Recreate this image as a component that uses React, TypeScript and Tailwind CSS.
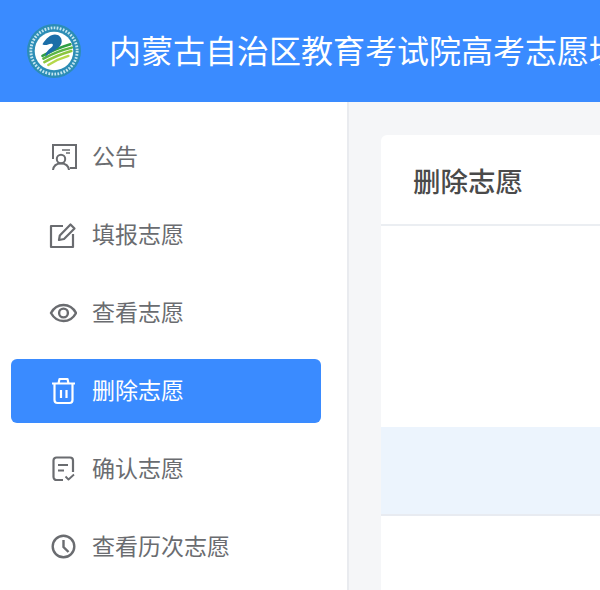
const cjk = { fontFamily: '"Noto Sans CJK SC", "Liberation Sans", sans-serif' };

function Logo() {
  return (
    <svg width="54" height="54" viewBox="0 0 56 56" className="shrink-0">
      <circle cx="28" cy="28" r="28" fill="#2c8db5" />
      <circle cx="28" cy="28" r="24" fill="none" stroke="#c4e6f0" strokeWidth="3" strokeDasharray="1.8 1.4" />
      <circle cx="28" cy="28" r="20" fill="#ffffff" />
      <g fill="none" strokeLinecap="round">
        <path d="M16 33C25 28 35 24 45 21" stroke="#2f9e44" strokeWidth="2.600" />
        <path d="M17 36C26 31 36 27 46.500 24.500" stroke="#5bb543" strokeWidth="2.600" />
        <path d="M18 39.500C27 34.500 36 31 46 28" stroke="#8cc63f" strokeWidth="2.600" />
        <path d="M22 42.500C29 38 36 35 43 33" stroke="#b5d84a" strokeWidth="2.400" />
      </g>
      <path
        d="M16 21C20 15 24 11 29 11C33 11 36 14 36 18C36 23 31 26 26 29C22 31 20 33 19 34C19 29 23 26 26 23.500C27.500 22 27 20 25 20.500C22 21 19 23 16 21z"
        fill="#1b6ea8"
      />
    </svg>
  );
}

function NoticeIcon() {
  return (
    <svg width="28" height="28" viewBox="0 0 28 28" fill="none" stroke="currentColor" strokeWidth="2">
      <path d="M4 16V2h23v23h-6" />
      <path d="M13 7h8M17 10h4" strokeWidth="1.500" />
      <circle cx="12" cy="16" r="4.200" />
      <path d="M4 27c.5-4 3-6.500 8-6.500s7.500 2.500 8 6.500" />
    </svg>
  );
}

function EditIcon() {
  return (
    <svg width="28" height="28" viewBox="0 0 28 28" fill="none" stroke="currentColor" strokeWidth="2.200" strokeLinejoin="round">
      <path d="M14 5H2v21h22V13" />
      <path d="M10 19l.8-4.500L21.500 3.500l4 4L15 18z" />
    </svg>
  );
}

function EyeIcon() {
  return (
    <svg width="28" height="28" viewBox="0 0 28 28" fill="none" stroke="currentColor" strokeWidth="2.400">
      <path d="M2 14c3-5.500 7-8 12.500-8S24 8.500 27 14c-3 5.500-7 8-12.500 8S5 19.500 2 14z" />
      <circle cx="14.500" cy="14" r="4.400" />
    </svg>
  );
}

function TrashIcon() {
  return (
    <svg width="28" height="28" viewBox="0 0 28 28" fill="none" stroke="currentColor" strokeWidth="2.200" strokeLinejoin="round">
      <path d="M3 6.500h23M9.500 6.500l1-4.500h8l1 4.500" />
      <path d="M5.500 6.500V23a3 3 0 0 0 3 3h12a3 3 0 0 0 3-3V6.500" />
      <path d="M12 13v8M17.500 13v8" />
    </svg>
  );
}

function ConfirmIcon() {
  return (
    <svg width="28" height="28" viewBox="0 0 28 28" fill="none" stroke="currentColor" strokeWidth="2.200" strokeLinejoin="round">
      <path d="M14 25H7.500a3 3 0 0 1-3-3V5.500a3 3 0 0 1 3-3H21a3 3 0 0 1 3 3V17" />
      <path d="M9 10h10M9 15.500h6" />
      <path d="M16.500 21.500l3 3 5.500-5" strokeWidth="1.800" />
    </svg>
  );
}

function ClockIcon() {
  return (
    <svg width="28" height="28" viewBox="0 0 28 28" fill="none" stroke="currentColor" strokeWidth="2.400">
      <circle cx="14.500" cy="13.500" r="10.800" />
      <path d="M14.500 7v7l5 5" />
    </svg>
  );
}

const NAV_ITEMS = [
  { label: "公告", icon: <NoticeIcon /> },
  { label: "填报志愿", icon: <EditIcon /> },
  { label: "查看志愿", icon: <EyeIcon /> },
  { label: "删除志愿", icon: <TrashIcon />, active: true },
  { label: "确认志愿", icon: <ConfirmIcon /> },
  { label: "查看历次志愿", icon: <ClockIcon /> },
];

export default function App() {
  return (
    <div className="flex h-[590px] w-[600px] flex-col overflow-hidden bg-white" style={cjk}>
      <header className="flex h-[102px] shrink-0 items-center gap-[28px] bg-[#3a8bff] pl-[27px]">
        <Logo />
        <h1 className="whitespace-nowrap pb-1 text-[32px] leading-none font-normal text-white">
          内蒙古自治区教育考试院高考志愿填报
        </h1>
      </header>

      <div className="flex min-h-0 flex-1">
        {/* 왼쪽 메뉴 */}
        <aside className="flex w-[349px] shrink-0 flex-col gap-3.5 border-r-2 border-[#e9ebef] pt-[23px] pl-[11px]">
          {NAV_ITEMS.map((item) => (
            <div
              key={item.label}
              className={[
                "flex h-16 w-[310px] items-center gap-[15px] rounded-md pl-[38px] text-[23px]",
                item.active ? "bg-[#3a8bff] text-white" : "text-[#6a6c70]",
              ].join(" ")}
            >
              <span className="flex h-7 w-7 items-center justify-center">{item.icon}</span>
              <span className="pb-1">{item.label}</span>
            </div>
          ))}
        </aside>

        <main className="min-w-0 flex-1 bg-[#f5f6f8] pt-[33px] pl-8">
          <section className="h-[600px] w-[400px] rounded-t-md bg-white">
            <div className="flex h-[91px] items-center border-b-2 border-[#ebeef2] pt-[3px] pl-8">
              <h2 className="text-[27.5px] leading-none font-medium text-[#4a4a4a]">删除志愿</h2>
            </div>
            <div className="h-[201px]" />
            <div className="h-[89px] border-b-2 border-[#e8ebf1] bg-[#ecf4fd]" />
          </section>
        </main>
      </div>
    </div>
  );
}
